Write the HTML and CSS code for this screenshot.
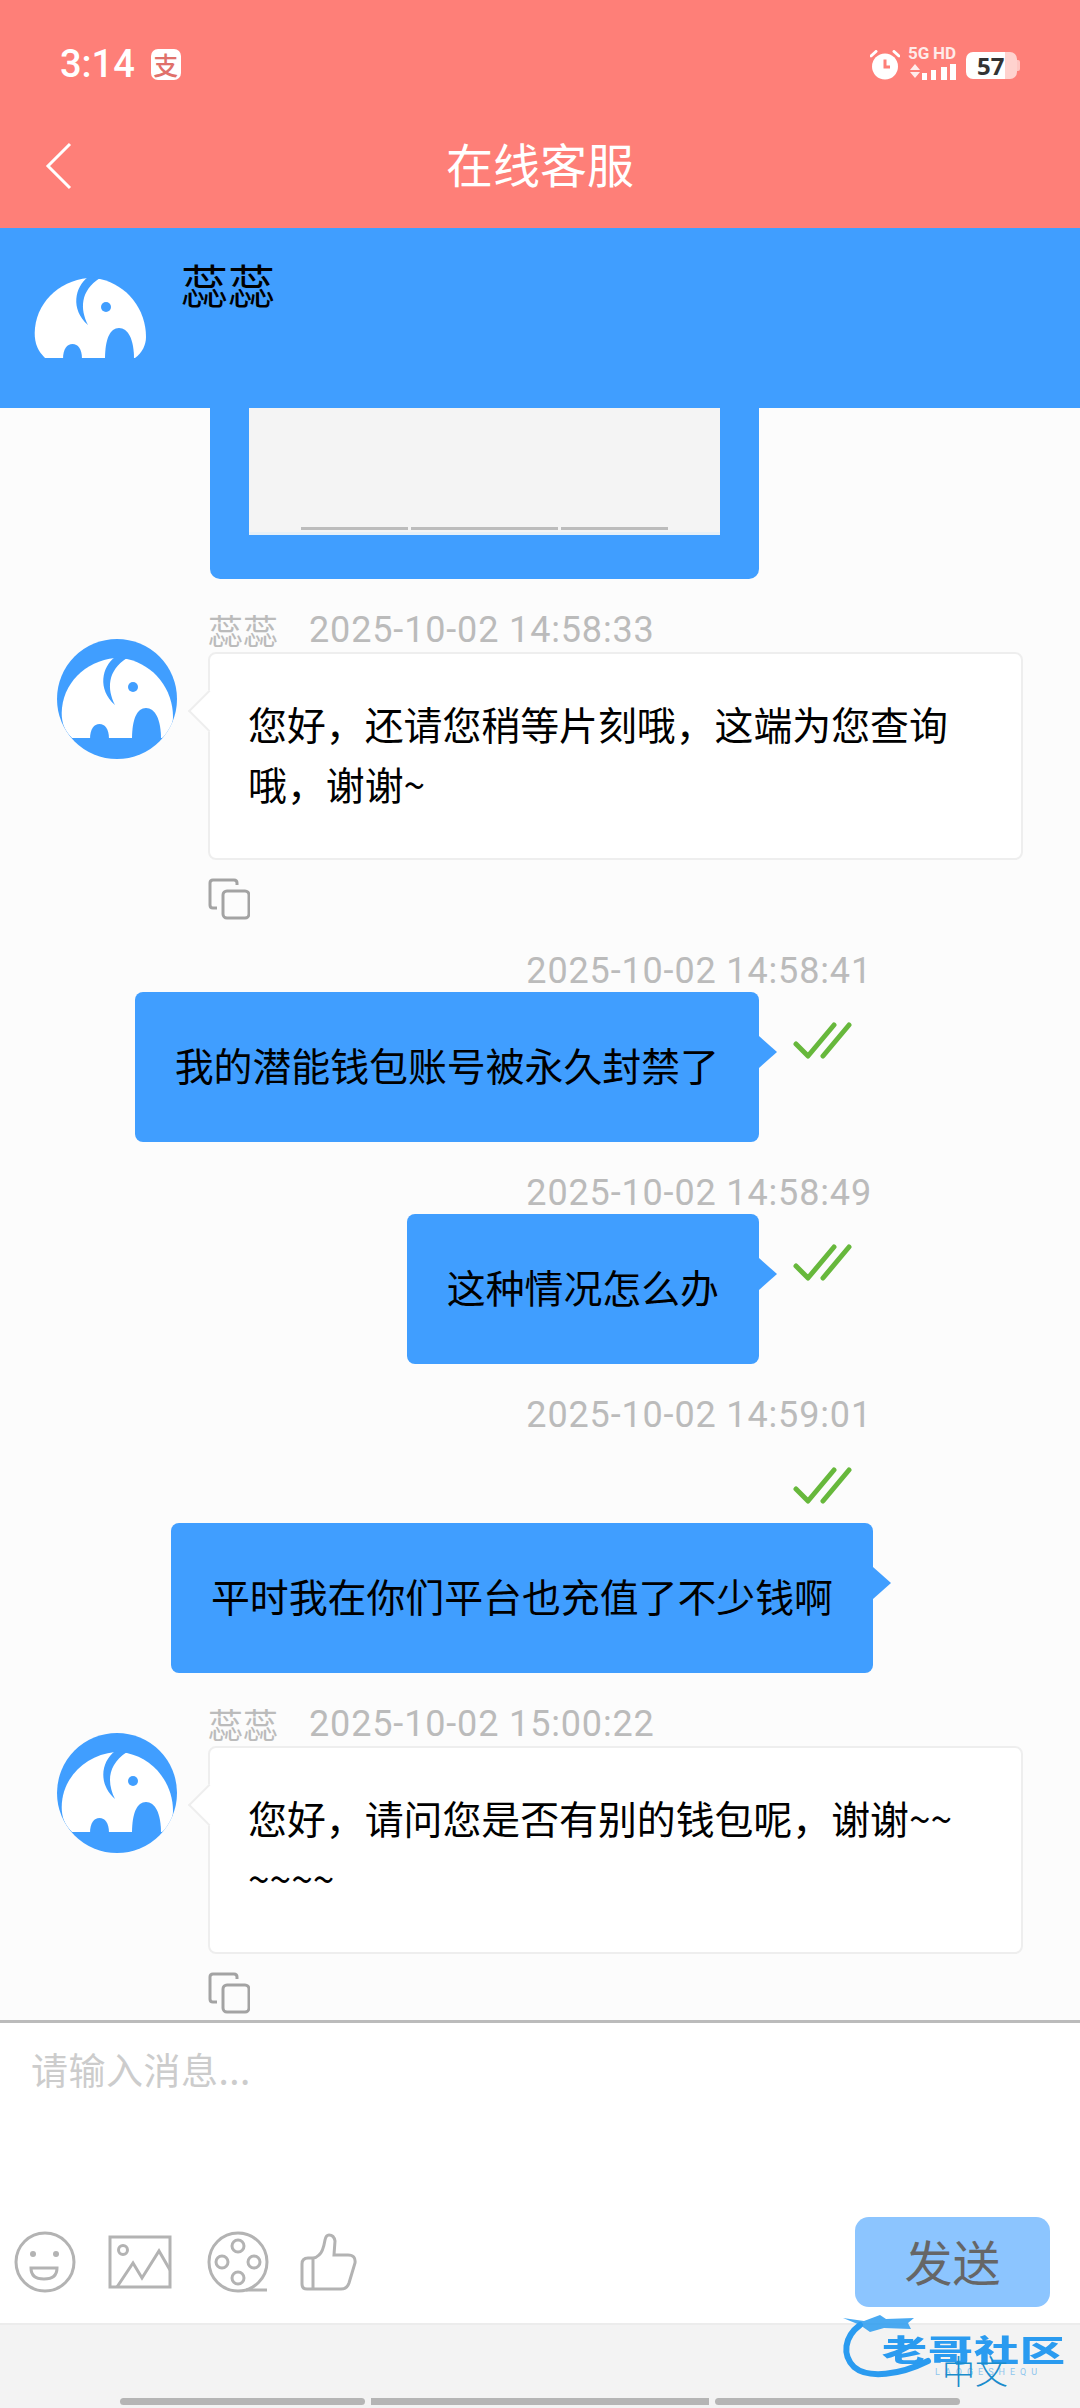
FILE: index.html
```html
<!DOCTYPE html>
<html lang="zh-CN">
<head>
    <meta charset="UTF-8">
    <meta name="viewport" content="width=device-width, initial-scale=1.0">
    <title>在线客服</title>
    <link rel="stylesheet" href="styles.css">
</head>
<body>

<svg class="defs" xmlns="http://www.w3.org/2000/svg">
    <symbol id="elephant" viewBox="0 0 120 120">
        <path fill="#fff" d="M15 99C8 92 4.700 85 4.700 74C5 45 28 22 58 19L70 20C97 26 116 50 116 78C116 86 112 94 105 99Z"/>
        <path fill="#409eff" d="M58 18C45 28 40 50 58 66C50 50 50 32 70 19Z"/>
        <path fill="#409eff" d="M33 100C33 90 37 85 42.500 85C48 85 52 90 52 100Z"/>
        <path fill="#409eff" d="M75 100C75 80 80 69 89 69C98 69 104 80 104 100Z"/>
        <circle fill="#409eff" cx="76" cy="48" r="5"/>
    </symbol>
    <symbol id="copy" viewBox="0 0 42 42">
        <rect x="15" y="13" width="26" height="27" rx="4" fill="none" stroke="#a3a3a3" stroke-width="3"/>
        <path d="M29 7V5Q29 2 26 2H5Q2 2 2 5V27Q2 30 5 30H9" fill="none" stroke="#a3a3a3" stroke-width="3"/>
    </symbol>
    <symbol id="read" viewBox="0 0 59 39">
        <path d="M3 23L15 35L41 4M30 35L56 4" fill="none" stroke="#67b83c" stroke-width="5" stroke-linecap="round" stroke-linejoin="round"/>
    </symbol>
</svg>

<div class="app">

    <header class="topbar">
        <div class="status">
            <div class="status-left">
                <span class="time">3:14</span>
                <span class="pay-badge">支</span>
            </div>
            <div class="status-right">
                <svg class="alarm" viewBox="0 0 30 30" width="30" height="30">
                    <circle cx="15" cy="16.500" r="13" fill="#fff"/>
                    <path d="M1 6L6 1.500M29 6L24 1.500" stroke="#fff" stroke-width="3" stroke-linecap="round"/>
                    <path d="M15 9.500V17H20" fill="none" stroke="#fe7f78" stroke-width="3"/>
                </svg>
                <div class="network">
                    <div class="network-type"><span>5G</span><span>HD</span></div>
                    <svg viewBox="0 0 48 17" width="48" height="17">
                        <path fill="#fff" opacity=".85" d="M2 7L7 1L12 7ZM2 9H12L7 15Z"/>
                        <path fill="#fff" d="M14 10h5v7h-5zM23 7h5v10h-5zM33 4h6v13h-6zM42 1h6v16h-6z"/>
                    </svg>
                </div>
                <div class="battery"><span>57</span></div>
            </div>
        </div>
        <div class="title-row">
            <svg class="back" viewBox="0 0 27 48" width="27" height="48">
                <path d="M25 2L3 24L25 46" fill="none" stroke="#fff" stroke-width="3"/>
            </svg>
            <h1 class="title">在线客服</h1>
        </div>
    </header>

    <div class="agent">
        <svg class="agent-avatar"><use href="#elephant"/></svg>
        <div class="agent-name">蕊蕊</div>
    </div>

    <main class="chat">
        <div class="picture-bubble">
            <div class="picture">
                <div class="picture-bars">
                    <i class="bar-side"></i><i class="bar-mid"></i><i class="bar-side"></i>
                </div>
            </div>
        </div>

        <section class="msg-in">
            <svg class="avatar"><use href="#elephant"/></svg>
            <div class="msg-body">
                <div class="meta"><span>蕊蕊</span><span class="stamp">2025-10-02 14:58:33</span></div>
                <div class="bubble-in">您好，还请您稍等片刻哦，这端为您查询哦，谢谢~</div>
                <svg class="copy"><use href="#copy"/></svg>
            </div>
        </section>

        <section class="msg-out">
            <div class="stamp">2025-10-02 14:58:41</div>
            <div class="out-row">
                <div class="bubble-out">我的潜能钱包账号被永久封禁了</div>
                <svg class="read"><use href="#read"/></svg>
            </div>
        </section>

        <section class="msg-out">
            <div class="stamp">2025-10-02 14:58:49</div>
            <div class="out-row">
                <div class="bubble-out">这种情况怎么办</div>
                <svg class="read"><use href="#read"/></svg>
            </div>
        </section>

        <section class="msg-out">
            <div class="stamp">2025-10-02 14:59:01</div>
            <svg class="read read-alone"><use href="#read"/></svg>
            <div class="bubble-out bubble-wide">平时我在你们平台也充值了不少钱啊</div>
        </section>

        <section class="msg-in">
            <svg class="avatar"><use href="#elephant"/></svg>
            <div class="msg-body">
                <div class="meta"><span>蕊蕊</span><span class="stamp">2025-10-02 15:00:22</span></div>
                <div class="bubble-in">您好，请问您是否有别的钱包呢，谢谢~~~~~~</div>
                <svg class="copy"><use href="#copy"/></svg>
            </div>
        </section>
    </main>

    <div class="composer">
        <div class="placeholder">请输入消息...</div>
        <div class="tools">
            <div class="tool-icons">
                <svg viewBox="0 0 64 64" width="64" height="64">
                    <circle cx="32" cy="32" r="29"/>
                    <circle class="solid" cx="20" cy="24" r="3"/>
                    <circle class="solid" cx="43" cy="24" r="3"/>
                    <path d="M18 38H44Q44 49 31 49Q18 49 18 38Z"/>
                </svg>
                <svg viewBox="0 0 64 64" width="64" height="64">
                    <rect x="2" y="7" width="60" height="50"/>
                    <circle cx="15" cy="20" r="4.500"/>
                    <path d="M9 57L25 33L34 48L51 21L62 40"/>
                </svg>
                <svg viewBox="0 0 64 64" width="64" height="64">
                    <circle cx="35" cy="32" r="29"/>
                    <circle cx="35" cy="16" r="6"/>
                    <circle cx="35" cy="48" r="6"/>
                    <circle cx="19" cy="32" r="6"/>
                    <circle cx="51" cy="32" r="6"/>
                    <path d="M43 60H64"/>
                </svg>
                <svg viewBox="0 0 64 64" width="64" height="64">
                    <path d="M15 28H10Q4 28 4 34V54Q4 59 9 59H43Q49 59 51 53L57 33Q58 25 50 25H36L37 11Q36 5 31 5Q28 5 27 10Q25 22 21 25Q18 28 15 28ZM15 28V59"/>
                </svg>
            </div>
            <button class="send">发送</button>
        </div>
    </div>

    <footer class="footer">
        <i class="nav-a"></i><i class="nav-b"></i><i class="nav-a"></i>
    </footer>

    <div class="watermark">
        <svg class="dragon" viewBox="0 0 110 70" width="110" height="70">
            <path d="M20 12C4 24 2 42 14 54C28 66 60 62 88 48" fill="none" stroke="#2a9bf0" stroke-width="6" stroke-linecap="round"/>
            <path d="M3 5L24 8L40 2L46 6L74 5L68 10L71 16L44 15L30 19L20 12Z" fill="#2a9bf0" opacity=".85"/>
        </svg>
        <span class="wm-name">老哥社区</span>
        <span class="wm-latin">LAOGESHEQU</span>
        <span class="wm-lang">中文</span>
    </div>

</div>

</body>
</html>
```

FILE: styles.css
```css
* {
    box-sizing: border-box;
}
body {
    margin: 0;
    font-family: "Noto Sans CJK SC", sans-serif;
    color: #000;
}
.defs {
    display: none;
}
.app {
    position: relative;
    width: 1080px;
    height: 2408px;
    display: flex;
    flex-direction: column;
    overflow: hidden;
    background-color: #fcfcfc;
}

/* top bar */
.topbar {
    height: 228px;
    flex-shrink: 0;
    background-color: #fe7f78;
    color: #fff;
}
.status {
    height: 104px;
    padding: 47px 60px 0;
    display: flex;
    justify-content: space-between;
    align-items: flex-start;
}
.status-left {
    display: flex;
    align-items: center;
    gap: 16px;
}
.time {
    font-family: Roboto, sans-serif;
    font-weight: 500;
    font-size: 38px;
    line-height: 34px;
}
.pay-badge {
    width: 30px;
    height: 31px;
    border-radius: 7px;
    background-color: #fff;
    color: #e0706a;
    font-size: 25px;
    font-weight: 500;
    line-height: 30px;
    text-align: center;
}
.status-right {
    display: flex;
    align-items: flex-start;
    gap: 8px;
}
.alarm {
    margin-top: 3px;
}
.network {
    display: flex;
    flex-direction: column;
    gap: 3px;
}
.network-type {
    display: flex;
    justify-content: space-between;
    font-family: Roboto, sans-serif;
    font-weight: 700;
    font-size: 17px;
    line-height: 13px;
    color: rgba(255, 255, 255, 0.85);
}
.battery {
    position: relative;
    width: 51px;
    height: 27px;
    margin: 5px 3px 0 2px;
    border-radius: 7px;
    background: linear-gradient(to right, #fff 76%, #ffd2ce 76%);
    color: #333;
    font-family: "Open Sans", sans-serif;
    font-weight: 700;
    font-size: 24px;
    line-height: 27px;
    padding-left: 11px;
}
.battery::after {
    content: "";
    position: absolute;
    right: -3px;
    top: 8px;
    width: 3px;
    height: 11px;
    border-radius: 0 2px 2px 0;
    background-color: #ffc6c2;
}
.title-row {
    display: flex;
    align-items: center;
    height: 124px;
    padding: 0 0 0 45px;
}
.title {
    flex: 1;
    margin: 0;
    padding: 0 72px 6px 0;
    text-align: center;
    font-size: 47px;
    font-weight: 400;
    line-height: 60px;
}

/* agent strip */
.agent {
    height: 180px;
    flex-shrink: 0;
    padding: 26px 0 0 30px;
    display: flex;
    gap: 31px;
    background-color: #409eff;
}
.agent-avatar {
    width: 120px;
    height: 120px;
    margin-top: 5px;
}
.agent-name {
    font-size: 47px;
    line-height: 60px;
}

/* messages */
.chat {
    flex: 1;
    min-height: 0;
    overflow: hidden;
    font-size: 38.88px;
    line-height: 60px;
}
.picture-bubble {
    width: 549px;
    margin-left: 210px;
    padding: 0 39px 44px;
    border-radius: 0 0 10px 10px;
    background-color: #409eff;
}
.picture {
    height: 127px;
    display: flex;
    align-items: flex-end;
    padding: 0 52px 2px;
    background-color: #f4f4f4;
    border-bottom: 3px solid #e6f0f8;
}
.picture-bars {
    width: 100%;
    display: flex;
    gap: 3px;
}
.picture-bars i {
    height: 3px;
    background-color: #bcbcbc;
}
.bar-side {
    flex: 107;
}
.bar-mid {
    flex: 147;
}
.stamp {
    font-family: Roboto, "Noto Sans CJK SC", sans-serif;
    font-size: 36px;
    line-height: 41px;
    letter-spacing: 0.85px;
    color: #bbb;
}
.msg-in {
    display: flex;
    gap: 31px;
    margin-top: 31px;
    padding-left: 57px;
}
.avatar {
    width: 120px;
    height: 120px;
    flex-shrink: 0;
    margin-top: 29px;
    border-radius: 50%;
    background-color: #409eff;
}
.msg-body {
    width: 815px;
}
.meta {
    display: flex;
    gap: 31px;
    height: 42px;
    font-size: 35px;
    line-height: 40px;
    color: #bbb;
}
.bubble-in {
    position: relative;
    width: 815px;
    padding: 39px 53px 45px 38px;
    border: 2px solid #eee;
    border-radius: 8px;
    background-color: #fff;
    word-break: break-all;
}
.bubble-in::before {
    content: "";
    position: absolute;
    left: -16px;
    top: 42px;
    width: 28px;
    height: 28px;
    border-left: 2px solid #eee;
    border-bottom: 2px solid #eee;
    background-color: #fff;
    transform: rotate(45deg);
}
.copy {
    display: block;
    width: 42px;
    height: 42px;
    margin-top: 18px;
}
.msg-out {
    display: flex;
    flex-direction: column;
    align-items: flex-end;
    margin-top: 31px;
    padding-right: 208px;
}
.out-row {
    display: flex;
    gap: 34px;
    margin-right: 20px;
}
.bubble-out {
    position: relative;
    padding: 42px 40px 48px;
    border-radius: 8px;
    background-color: #409eff;
}
.bubble-out::after {
    content: "";
    position: absolute;
    right: -18px;
    top: 44px;
    border-left: 18px solid #409eff;
    border-top: 16px solid transparent;
    border-bottom: 16px solid transparent;
}
.bubble-wide {
    margin: 18px -1px 0 0;
}
.read {
    width: 59px;
    height: 39px;
    margin-top: 29px;
}
.read-alone {
    margin: 30px 20px 0 0;
}

/* input area */
.composer {
    height: 303px;
    flex-shrink: 0;
    display: flex;
    flex-direction: column;
    justify-content: space-between;
    padding: 24px 30px 16px 13px;
    border-top: 3px solid #bbb;
    background-color: #fff;
}
.placeholder {
    padding-left: 18px;
    font-size: 37px;
    line-height: 44px;
    letter-spacing: 0.5px;
    color: #ccc;
}
.tools {
    display: flex;
    justify-content: space-between;
    align-items: center;
}
.tool-icons {
    display: flex;
    gap: 31px;
}
.tool-icons svg {
    fill: none;
    stroke: #b3b3b3;
    stroke-width: 3;
    overflow: visible;
}
.tool-icons .solid {
    fill: #b3b3b3;
    stroke: none;
}
.send {
    width: 195px;
    height: 90px;
    padding: 0 0 4px;
    border: none;
    border-radius: 14px;
    background-color: #8cc5ff;
    color: #666;
    font-family: inherit;
    font-size: 48px;
    line-height: 60px;
}
.footer {
    height: 85px;
    flex-shrink: 0;
    display: flex;
    align-items: flex-end;
    gap: 6px;
    padding: 0 120px 3px;
    border-top: 2px solid #ececec;
    background-color: #f3f3f3;
}
.footer i {
    height: 7px;
    background-color: #b5b5b5;
}
.nav-a {
    flex: 245;
    border-radius: 4px;
}
.nav-b {
    flex: 337;
}

/* watermark sits over the footer */
.watermark {
    position: absolute;
    left: 838px;
    top: 2312px;
    width: 230px;
    height: 80px;
}
.dragon {
    position: absolute;
    left: 2px;
    top: 1px;
    filter: blur(0.6px);
}
.wm-name {
    position: absolute;
    left: 44px;
    top: 7px;
    font-size: 45px;
    font-weight: 900;
    line-height: 60px;
    letter-spacing: 1px;
    white-space: nowrap;
    color: #2a9bf0;
    transform: scaleY(0.65);
    filter: blur(0.6px);
}
.wm-latin {
    position: absolute;
    left: 97px;
    top: 54px;
    font-family: Roboto, sans-serif;
    font-size: 9px;
    line-height: 12px;
    letter-spacing: 5px;
    color: #8fc6ee;
}
.wm-lang {
    position: absolute;
    left: 104px;
    top: 36px;
    font-size: 33px;
    font-weight: 300;
    line-height: 44px;
    color: #1a8ccc;
}
```
